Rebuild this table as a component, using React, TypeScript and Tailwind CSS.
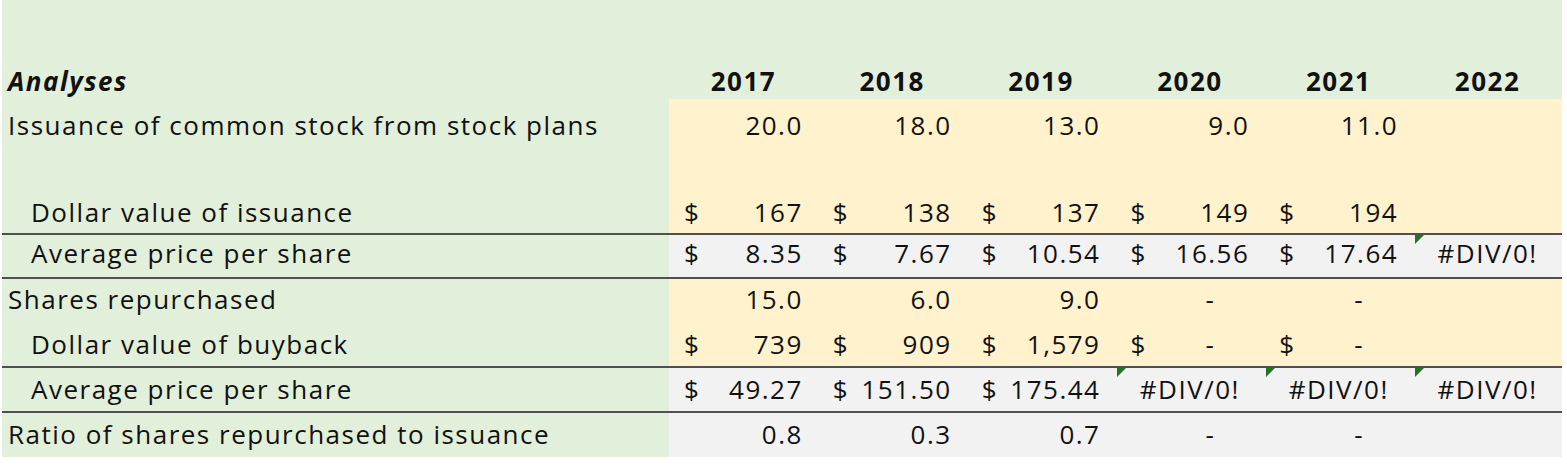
import React from 'react';

type Tone = 'green' | 'yellow' | 'grey';

type Cell =
  | { kind: 'empty' }
  | { kind: 'year'; v: string }
  | { kind: 'num'; v: string; dollar?: boolean }
  | { kind: 'dash'; dollar?: boolean }
  | { kind: 'err'; flag?: boolean };

interface RowProps {
  label?: string;
  indent?: boolean;
  heading?: boolean;
  h: string;
  pt: string;
  tone: Tone;
  cells: Cell[];
}

const toneBg: Record<Tone, string> = {
  green: '',
  yellow: 'bg-[#FFF2CC]',
  grey: 'bg-[#F2F2F2]',
};

const n = (v: string, dollar = false): Cell => ({ kind: 'num', v, dollar });
const empty: Cell = { kind: 'empty' };
const dash = (dollar = false): Cell => ({ kind: 'dash', dollar });
const err = (flag = true): Cell => ({ kind: 'err', flag });

// little green error marker in the top-left corner of a cell
function ErrFlag() {
  return (
    <svg className="absolute top-0 left-[2px]" width="9" height="9" viewBox="0 0 9 9">
      <polygon points="0,0 9,0 0,9" fill="#1f7522" />
    </svg>
  );
}

function DataCell({ cell, tone, pt }: { cell: Cell; tone: Tone; pt: string }) {
  const base = `relative flex items-start ${pt} ${toneBg[tone]}`;
  switch (cell.kind) {
    case 'year':
      return <div className={`${base} justify-center font-bold`}>{cell.v}</div>;
    case 'num':
      return cell.dollar ? (
        <div className={`${base} justify-between pl-[15px] pr-[15px]`}>
          <span>$</span>
          <span>{cell.v}</span>
        </div>
      ) : (
        <div className={`${base} justify-end pr-[15px]`}>{cell.v}</div>
      );
    case 'dash':
      return (
        <div className={`${base} justify-between pl-[15px] pr-[49px]`}>
          <span>{cell.dollar ? '$' : ''}</span>
          <span>-</span>
        </div>
      );
    case 'err':
      return (
        <div className={`${base} justify-center`}>
          {cell.flag && <ErrFlag />}
          #DIV/0!
        </div>
      );
    default:
      return <div className={base} />;
  }
}

function Row({ label, indent, heading, h, pt, tone, cells }: RowProps) {
  return (
    <div className={`grid grid-cols-[667px_repeat(6,minmax(0,1fr))] ${h}`}>
      <div
        className={`flex items-start ${pt} ${indent ? 'pl-[29px]' : 'pl-[6px]'} ${
          heading ? 'font-bold italic' : ''
        }`}
      >
        {label}
      </div>
      {cells.map((c, i) => (
        <DataCell key={i} cell={c} tone={tone} pt={pt} />
      ))}
    </div>
  );
}

function Rule() {
  return <div className="h-[2px] bg-[#505050]" />;
}

export default function App() {
  const years: Cell[] = ['2017', '2018', '2019', '2020', '2021', '2022'].map((v) => ({ kind: 'year', v }));

  return (
    <div className="w-full h-[464px] bg-white">
      <div
        className="ml-[2px] w-[1560px] bg-[#E2EFDA] text-[26px] leading-[30px] tracking-[1.5px] text-[#111111]"
        style={{ fontFamily: "'Open Sans', 'Noto Sans', sans-serif" }}
      >
        <div className="h-[57px]" />
        <Row label="Analyses" heading h="h-[42px]" pt="pt-[9px]" tone="green" cells={years} />
        <Row
          label="Issuance of common stock from stock plans"
          h="h-[44px]"
          pt="pt-[11px]"
          tone="yellow"
          cells={[n('20.0'), n('18.0'), n('13.0'), n('9.0'), n('11.0'), empty]}
        />
        <Row h="h-[46px]" pt="pt-[8px]" tone="yellow" cells={[empty, empty, empty, empty, empty, empty]} />
        <Row
          label="Dollar value of issuance"
          indent
          h="h-[44px]"
          pt="pt-[8px]"
          tone="yellow"
          cells={[n('167', true), n('138', true), n('137', true), n('149', true), n('194', true), empty]}
        />
        <Rule />
        <Row
          label="Average price per share"
          indent
          h="h-[42px]"
          pt="pt-[3px]"
          tone="grey"
          cells={[n('8.35', true), n('7.67', true), n('10.54', true), n('16.56', true), n('17.64', true), err()]}
        />
        <Rule />
        <Row
          label="Shares repurchased"
          h="h-[43px]"
          pt="pt-[5px]"
          tone="yellow"
          cells={[n('15.0'), n('6.0'), n('9.0'), dash(), dash(), empty]}
        />
        <Row
          label="Dollar value of buyback"
          indent
          h="h-[44px]"
          pt="pt-[7px]"
          tone="yellow"
          cells={[n('739', true), n('909', true), n('1,579', true), dash(true), dash(true), empty]}
        />
        <Rule />
        <Row
          label="Average price per share"
          indent
          h="h-[43px]"
          pt="pt-[6px]"
          tone="grey"
          cells={[n('49.27', true), n('151.50', true), n('175.44', true), err(), err(), err()]}
        />
        <Rule />
        <Row
          label="Ratio of shares repurchased to issuance"
          h="h-[44px]"
          pt="pt-[6px]"
          tone="grey"
          cells={[n('0.8'), n('0.3'), n('0.7'), dash(), dash(), empty]}
        />
      </div>
    </div>
  );
}
